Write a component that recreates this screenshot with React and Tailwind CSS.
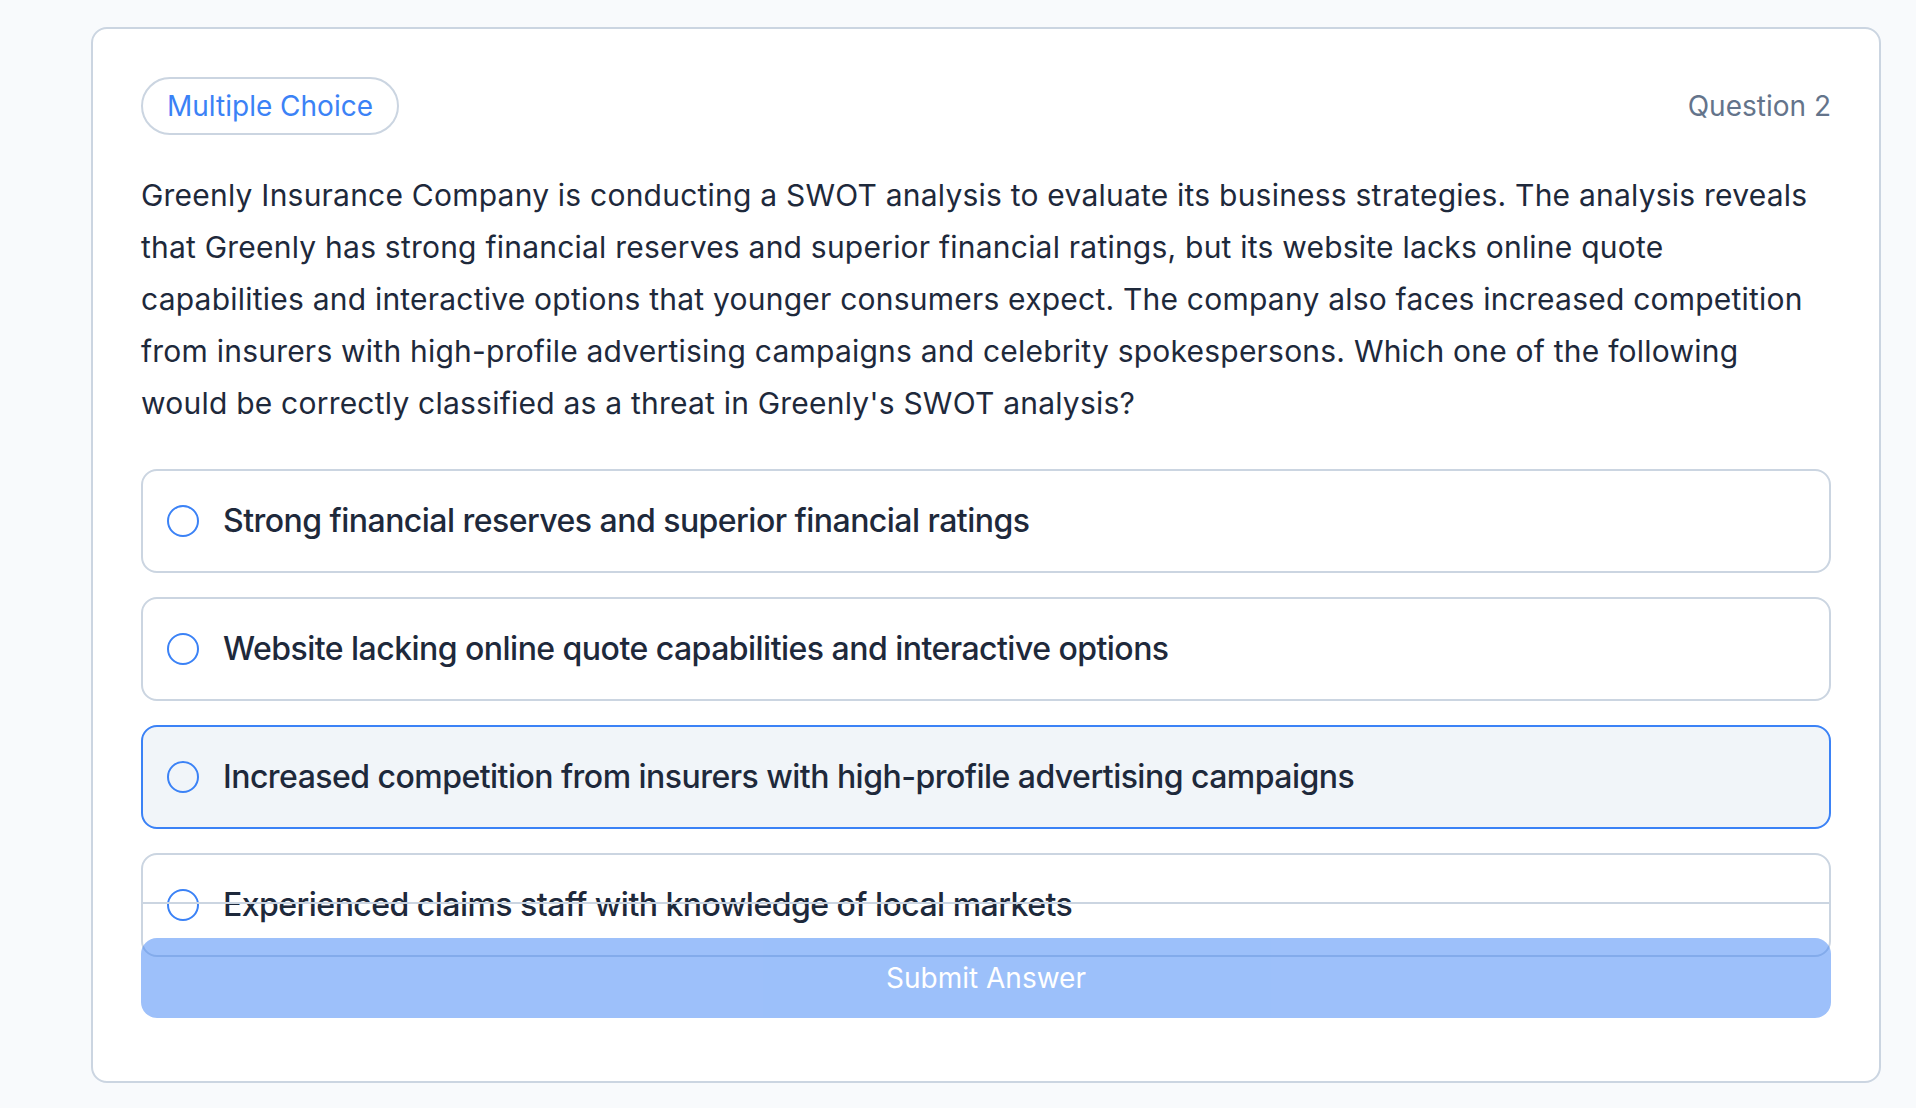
import React, { useState } from 'react';

const options = [
  'Strong financial reserves and superior financial ratings',
  'Website lacking online quote capabilities and interactive options',
  'Increased competition from insurers with high-profile advertising campaigns',
  'Experienced claims staff with knowledge of local markets',
];

export default function App() {
  const [selected, setSelected] = useState(2);

  return (
    <div
      className="min-h-screen bg-[#f8fafc] pt-[27px] pl-[91px]"
      style={{ fontFamily: 'Inter, "Noto Sans", sans-serif' }}
    >
      <div className="box-border w-[1790px] h-[1056px] rounded-[16px] border-2 border-[#cbd5e1] bg-white p-[48px]">
        {/* header */}
        <div className="flex items-center justify-between">
          <span className="flex h-[58px] items-center rounded-full border-2 border-[#cbd5e1] px-[24px] text-[28px] text-[#3b82f6]">
            Multiple Choice
          </span>
          <span className="text-[28px] text-[#64748b]">Question 2</span>
        </div>

        <p className="mt-[34px] text-[30px] leading-[52px] tracking-[0.22px] text-[#1e293b]">
          Greenly Insurance Company is conducting a SWOT analysis to evaluate its business strategies. The analysis
          reveals that Greenly has strong financial reserves and superior financial ratings, but its website lacks
          online quote capabilities and interactive options that younger consumers expect. The company also faces
          increased competition from insurers with high-profile advertising campaigns and celebrity spokespersons.
          Which one of the following would be correctly classified as a threat in Greenly's SWOT analysis?
        </p>

        {/* options */}
        <div className="mt-[40px] flex h-[433px] flex-col gap-[24px]">
          {options.map((opt, i) => (
            <button
              key={opt}
              type="button"
              onClick={() => setSelected(i)}
              className={
                'flex h-[104px] shrink-0 items-center gap-[24px] rounded-[16px] border-2 px-[24px] text-left ' +
                (selected === i ? 'border-[#3b82f6] bg-[#f1f5f9]' : 'border-[#cbd5e1] bg-white')
              }
            >
              <span className="h-[32px] w-[32px] shrink-0 rounded-full border-2 border-[#3b82f6]" />
              <span className="text-[32px] font-medium tracking-[-0.53px] text-[#1e293b]">{opt}</span>
            </button>
          ))}
        </div>

        {/* footer */}
        <div className="relative border-t-2 border-[#cbd5e1] pt-[34px]">
          <button
            type="button"
            disabled
            className="h-[80px] w-full rounded-[16px] bg-[#3b82f6] text-[28px] text-white opacity-50"
          >
            Submit Answer
          </button>
        </div>
      </div>
    </div>
  );
}
